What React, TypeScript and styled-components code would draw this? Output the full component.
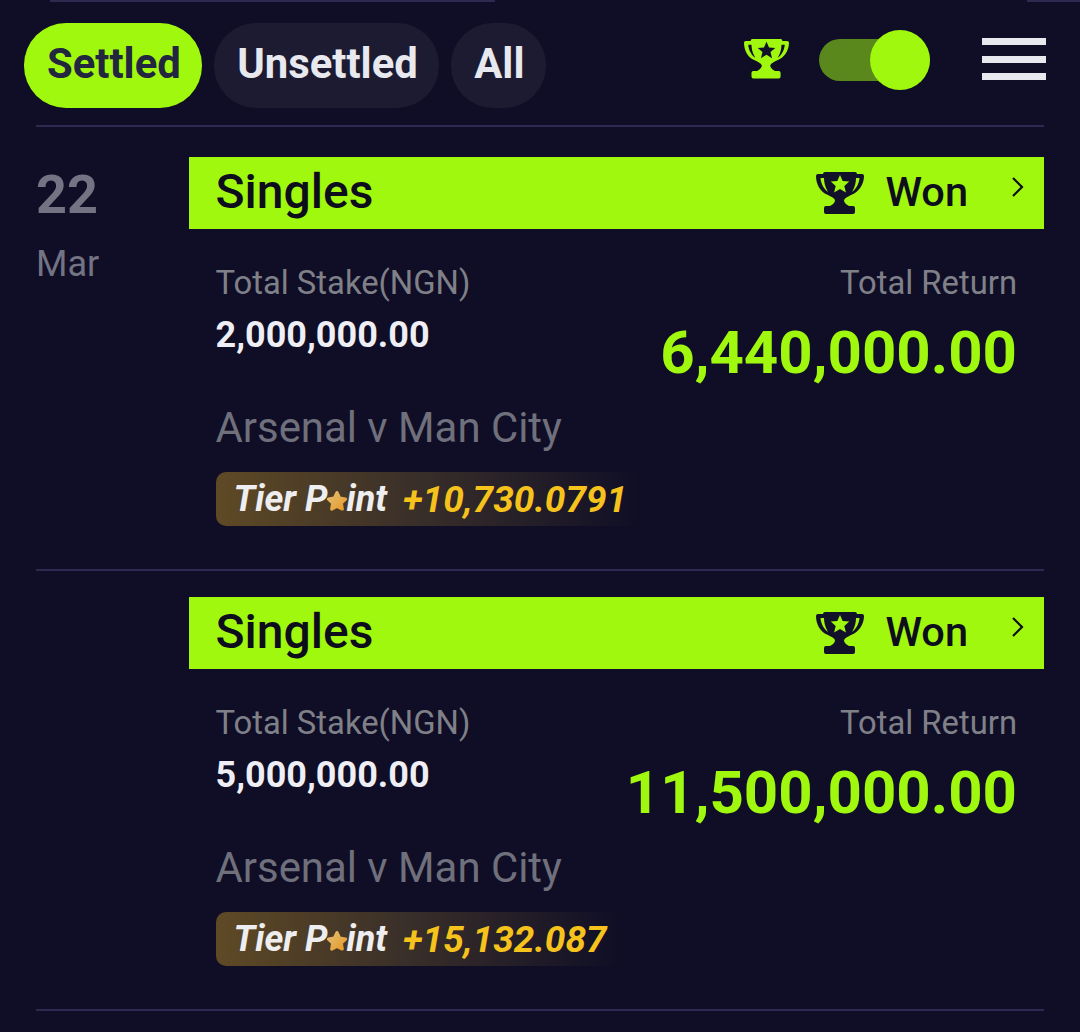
import styled, { createGlobalStyle } from 'styled-components';

const GlobalStyle = createGlobalStyle`
	html, body {
		margin: 0;
		padding: 0;
		background: #0f0e26;
		font-family: Roboto, 'Liberation Sans', sans-serif;
	}
`;

const Page = styled.div`
	width: 1080px;
	height: 1032px;
	overflow: hidden;
	background: #0f0e26;
`;

const TopStrip = styled.div`
	display: flex;
	height: 2px;
	padding-left: 50px;
`;

const TopLine = styled.div<{ $width: number; $gap?: number }>`
	width: ${props => props.$width}px;
	margin-left: ${props => props.$gap ?? 0}px;
	background: #2d2a52;
`;

const Toolbar = styled.div`
	display: flex;
	align-items: center;
	height: 85px;
	margin-top: 21px;
	padding: 0 34px 0 24px;
`;

const Tabs = styled.div`
	display: flex;
	gap: 12px;
`;

const Tab = styled.div<{ $active?: boolean }>`
	display: flex;
	align-items: center;
	justify-content: center;
	height: 81px;
	padding: 0 21.500px 4px 23px;
	border-radius: 42px;
	font-size: 41.800px;
	font-weight: 700;
	background: ${props => (props.$active ? '#a0f80f' : '#1c1b31')};
	color: ${props => (props.$active ? '#23263f' : '#e8e8ef')};
`;

const Tools = styled.div`
	display: flex;
	align-items: center;
	margin: 0 0 11px auto;
`;

const ToolbarTrophy = styled.div`
	margin-bottom: 2px;
`;

const Toggle = styled.div`
	position: relative;
	width: 111px;
	height: 42px;
	margin-left: 30px;
	border-radius: 21px;
	background: #5b881c;
`;

const Knob = styled.div`
	position: absolute;
	top: -9px;
	right: 0;
	width: 60px;
	height: 60px;
	border-radius: 50%;
	background: #a0f80f;
`;

const Burger = styled.div`
	display: flex;
	flex-direction: column;
	gap: 10.500px;
	width: 64px;
	margin: 0 0 2px 52px;
`;

const BurgerBar = styled.div`
	height: 7px;
	background: #e8e8ef;
`;

const Divider = styled.div`
	height: 2px;
	margin: 0 36px;
	background: #2d2a52;
`;

const ToolbarDivider = styled(Divider)`
	margin-top: 17px;
	margin-bottom: 4px;
`;

const Row = styled.div`
	display: flex;
	height: 412px;
	padding: 26px 36px 0;
`;

const DateCol = styled.div`
	width: 153px;
	flex-shrink: 0;
`;

const Day = styled.div`
	margin-top: 8px;
	font-size: 54px;
	line-height: 60px;
	font-weight: 700;
	color: #737384;
`;

const Month = styled.div`
	margin-top: 18px;
	font-size: 36px;
	line-height: 42px;
	color: #737384;
`;

const Card = styled.div`
	flex: 1;
`;

const CardHead = styled.div`
	display: flex;
	align-items: center;
	height: 72px;
	padding: 0 19px 0 26.500px;
	background: #a0f80f;
	color: #0d0d1c;
`;

const HeadTitle = styled.div`
	margin: 0 auto 4px 0;
	font-size: 48px;
	font-weight: 500;
`;

const HeadStatus = styled.div`
	margin: 0 0 4px 21px;
	font-size: 41.500px;
	font-weight: 500;
`;

const Chevron = styled.svg`
	display: block;
	width: 14px;
	height: 22px;
	margin: -12px 0 0 43px;
`;

const CardBody = styled.div`
	padding: 0 27px 0 26.500px;
`;

const Amounts = styled.div`
	display: flex;
	justify-content: space-between;
	margin-top: 35px;
`;

const AmountCol = styled.div`
	display: flex;
	flex-direction: column;
`;

const ReturnCol = styled(AmountCol)`
	align-items: flex-end;
`;

const AmountLabel = styled.div`
	font-size: 32.800px;
	line-height: 38px;
	color: #808089;
`;

const Stake = styled.div`
	margin-top: 12px;
	font-size: 36px;
	line-height: 42px;
	font-weight: 700;
	color: #eeeef4;
`;

const Return = styled.div`
	margin-top: 16px;
	font-size: 60px;
	line-height: 70px;
	font-weight: 700;
	color: #a0f80f;
`;

const Match = styled.div`
	margin-top: 16px;
	font-size: 41.900px;
	line-height: 48px;
	color: #70707c;
`;

const TierBadge = styled.div`
	display: inline-flex;
	align-items: center;
	height: 54px;
	margin-top: 20px;
	padding: 0 14px 0 18px;
	border-radius: 10px;
	font-size: 36px;
	font-weight: 700;
	font-style: italic;
	background: linear-gradient(90deg, #5f4a25 0%, #3b3029 45%, #0f0e26 100%);
`;

const TierLabel = styled.span`
	display: flex;
	align-items: center;
	color: #eeeef0;
`;

const TierStar = styled.svg`
	display: block;
	width: 24px;
	height: 24px;
	margin: 3px -3px 0 -2px;
`;

const TierValue = styled.span`
	margin-left: 16px;
	font-size: 37px;
	color: #f6c21c;
`;

const TrophyIcon = styled.svg<{ $width: number }>`
	display: block;
	width: ${props => props.$width}px;
	height: auto;
`;

function Trophy({ width, body, star }: { width: number; body: string; star: string }) {
	return (
		<TrophyIcon $width={width} viewBox='0 0 48 42'>
			<path
				fill={body}
				fillRule='evenodd'
				d='M9 0H39Q41 0 41 2H46Q48 2 48 4C48 12 43 20 35 23C32 24.500 29 26 28 28C28 30 29 32 33 34H37Q39 34 39 36V40Q39 42 37 42H10Q8 42 8 40V36Q8 34 10 34H14C18 32 19 30 19 28C18 26 15 24.500 12 23C4 20 0 12 0 4Q0 2 2 2H7Q7 0 9 0ZM4.500 6H8C8 10 9 15 12 20C8 17 5 12 4.500 6ZM43.500 6H40C40 10 39 15 36 20C40 17 43 12 43.500 6Z'
			/>
			<path
				fill={star}
				d='M24 3l2.700 6.100 6.600.5-5 4.300 1.600 6.500-5.900-3.500-5.900 3.500 1.600-6.500-5-4.300 6.600-.5z'
			/>
		</TrophyIcon>
	);
}

function BetRow({ showDate, stake, total, tier }: { showDate?: boolean; stake: string; total: string; tier: string }) {
	return (
		<Row>
			<DateCol>
				{showDate && (
					<>
						<Day>22</Day>
						<Month>Mar</Month>
					</>
				)}
			</DateCol>
			<Card>
				<CardHead>
					<HeadTitle>Singles</HeadTitle>
					<Trophy width={48} body='#12112a' star='#a0f80f' />
					<HeadStatus>Won</HeadStatus>
					<Chevron viewBox='0 0 14 22'>
						<path d='M2 2l9 9-9 9' fill='none' stroke='#0d0d1c' strokeWidth='2.200' />
					</Chevron>
				</CardHead>
				<CardBody>
					<Amounts>
						<AmountCol>
							<AmountLabel>Total Stake(NGN)</AmountLabel>
							<Stake>{stake}</Stake>
						</AmountCol>
						<ReturnCol>
							<AmountLabel>Total Return</AmountLabel>
							<Return>{total}</Return>
						</ReturnCol>
					</Amounts>
					<Match>Arsenal v Man City</Match>
					<TierBadge>
						<TierLabel>
							Tier P
							<TierStar viewBox='0 0 22 22'>
								<defs>
									<linearGradient id='tierStar' x1='0' y1='0' x2='1' y2='1'>
										<stop offset='0' stopColor='#e2bd72' />
										<stop offset='1' stopColor='#e79a2a' />
									</linearGradient>
								</defs>
								<path
									fill='url(#tierStar)'
									stroke='url(#tierStar)'
									strokeWidth='3'
									strokeLinejoin='round'
									d='M11 3.500l2.400 4.900 5.400.8-3.900 3.800.9 5.300-4.800-2.500-4.800 2.500.9-5.300-3.900-3.800 5.400-.8z'
								/>
							</TierStar>
							int
						</TierLabel>
						<TierValue>{tier}</TierValue>
					</TierBadge>
				</CardBody>
			</Card>
		</Row>
	);
}

function App() {
	return (
		<Page>
			<GlobalStyle />
			<TopStrip>
				<TopLine $width={445} />
				<TopLine $width={53} $gap={532} />
			</TopStrip>
			<Toolbar>
				<Tabs>
					<Tab $active>Settled</Tab>
					<Tab>Unsettled</Tab>
					<Tab>All</Tab>
				</Tabs>
				<Tools>
					<ToolbarTrophy>
						<Trophy width={45} body='#a0f80f' star='#12112a' />
					</ToolbarTrophy>
					<Toggle>
						<Knob />
					</Toggle>
					<Burger>
						<BurgerBar />
						<BurgerBar />
						<BurgerBar />
					</Burger>
				</Tools>
			</Toolbar>
			<ToolbarDivider />
			<BetRow showDate stake='2,000,000.00' total='6,440,000.00' tier='+10,730.0791' />
			<Divider />
			<BetRow stake='5,000,000.00' total='11,500,000.00' tier='+15,132.087' />
			<Divider />
		</Page>
	);
}

export default App;
